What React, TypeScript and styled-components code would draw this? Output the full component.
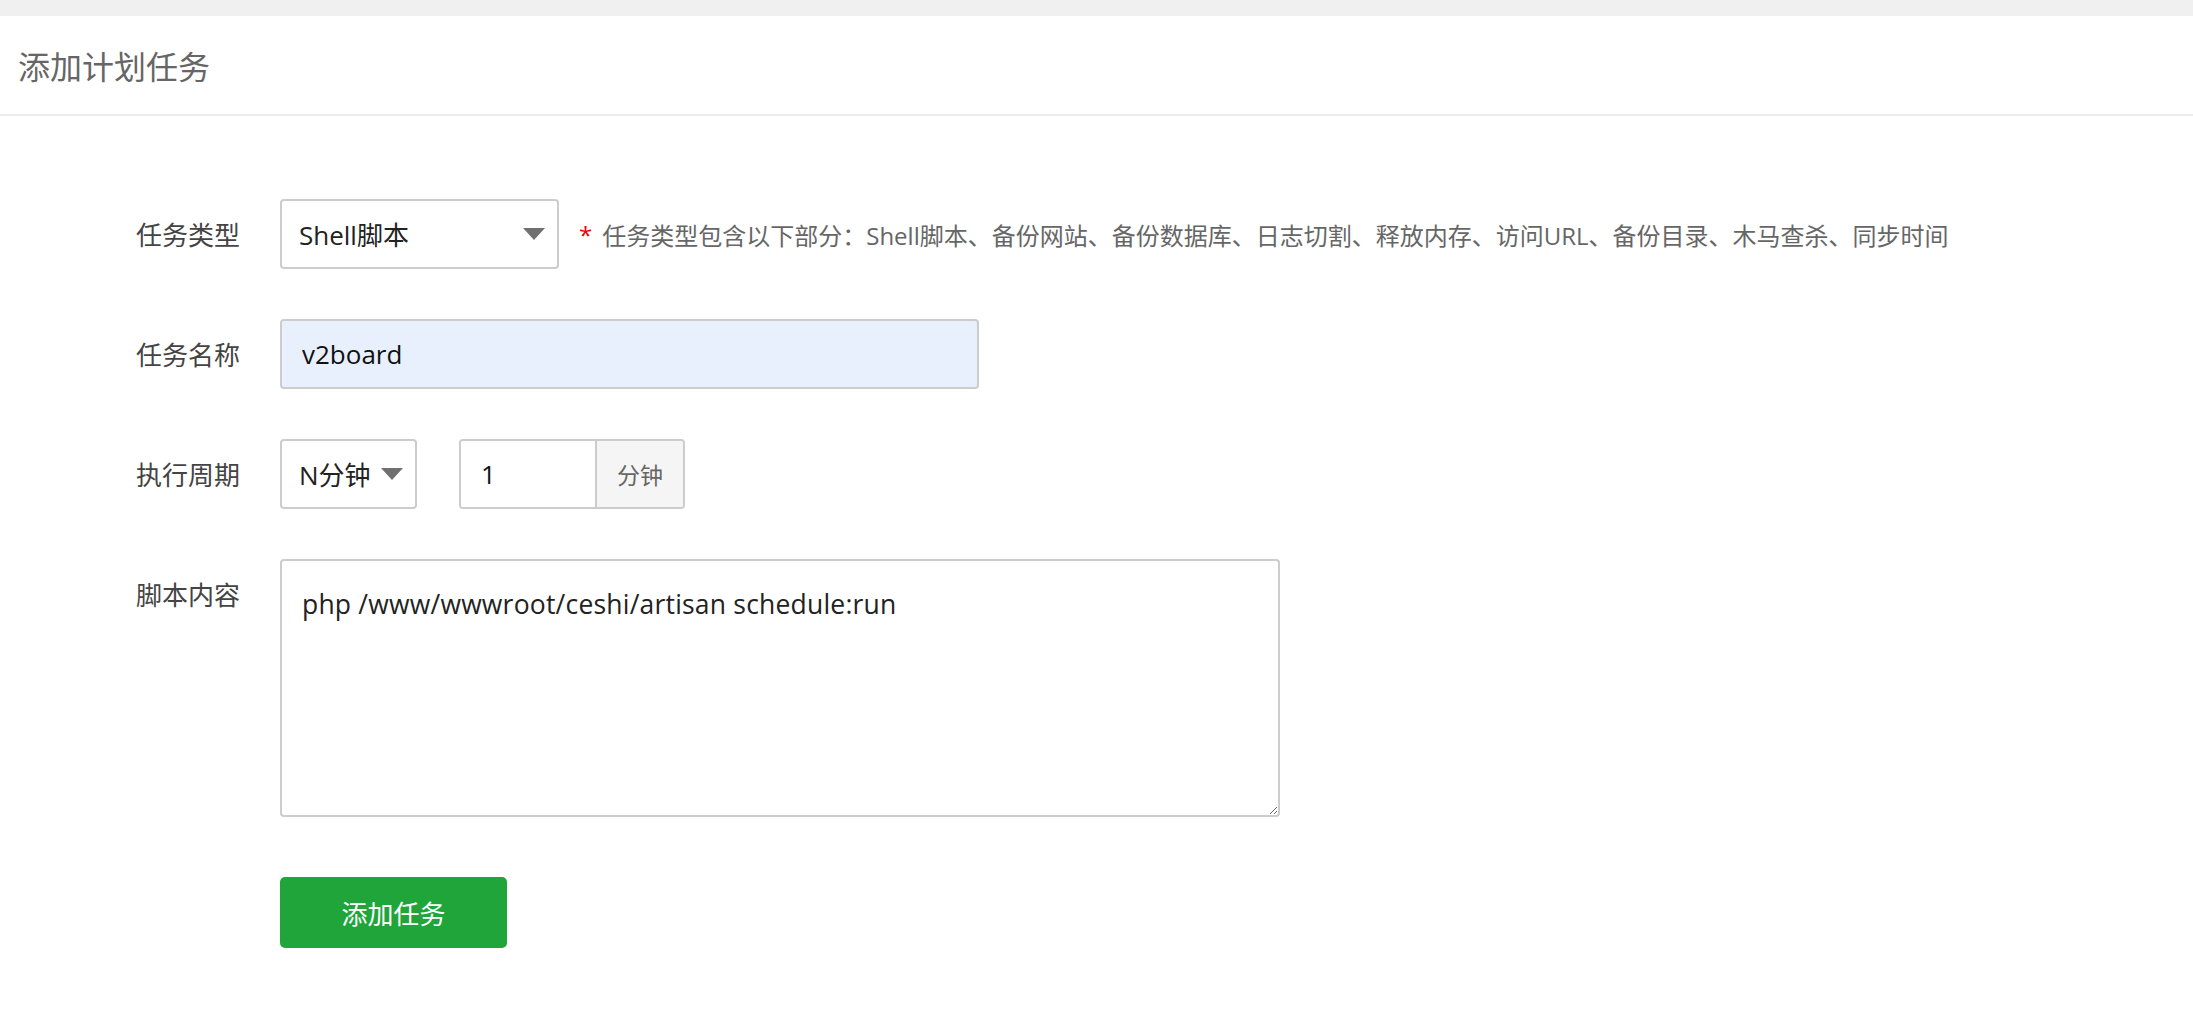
import React from "react";
import styled, { createGlobalStyle } from "styled-components";

const GlobalStyle = createGlobalStyle`
  html, body {
    margin: 0;
    padding: 0;
    background: #f0f0f0;
  }
  body {
    font-family: "Open Sans", "Noto Sans CJK SC", sans-serif;
  }
  * {
    box-sizing: border-box;
  }
`;

const TASK_TYPES =
  "任务类型包含以下部分：Shell脚本、备份网站、备份数据库、日志切割、释放内存、访问URL、备份目录、木马查杀、同步时间";

const Caret: React.FC = () => (
  <svg width="22" height="12" viewBox="0 0 22 12">
    <polygon points="0,0 22,0 11,12" fill="#707070" />
  </svg>
);

const App: React.FC = () => {
  return (
    <Page>
      <GlobalStyle />
      <Panel>
        <Header>
          <Title>添加计划任务</Title>
        </Header>

        <Form>
          <Row>
            <Label>任务类型</Label>
            <SelectBox width={279}>
              <span>Shell脚本</span>
              <Caret />
            </SelectBox>
            <Hint>
              <Star>*</Star>
              {TASK_TYPES}
            </Hint>
          </Row>

          <Row>
            <Label>任务名称</Label>
            <TextInput width={699} filled defaultValue="v2board" />
          </Row>

          <Row>
            <Label>执行周期</Label>
            <SelectBox width={137}>
              <span>N分钟</span>
              <Caret />
            </SelectBox>
            <InputGroup>
              <GroupInput defaultValue="1" />
              <Addon>分钟</Addon>
            </InputGroup>
          </Row>

          <Row top>
            <Label>脚本内容</Label>
            <ScriptArea defaultValue="php /www/wwwroot/ceshi/artisan schedule:run" />
          </Row>

          <ButtonRow>
            <SubmitButton type="button">添加任务</SubmitButton>
          </ButtonRow>
        </Form>
      </Panel>
    </Page>
  );
};

export default App;

const Page = styled.div`
  min-height: 100vh;
  padding-top: 16px;
  display: flex;
  flex-direction: column;
`;

const Panel = styled.div`
  flex: 1;
  background: #fff;
`;

const Header = styled.div`
  height: 100px;
  padding-left: 18px;
  display: flex;
  align-items: center;
  border-bottom: 2px solid #ececec;
`;

const Title = styled.h1`
  margin: 0;
  font-size: 32px;
  font-weight: 400;
  color: #666;
  font-family: "Noto Sans CJK SC", sans-serif;
`;

const Form = styled.div`
  padding-top: 83px;
  display: flex;
  flex-direction: column;
  gap: 50px;
`;

const Row = styled.div<{ top?: boolean }>`
  display: flex;
  align-items: ${(p) => (p.top ? "flex-start" : "center")};
`;

const Label = styled.div`
  width: 240px;
  margin-right: 40px;
  text-align: right;
  font-size: 26px;
  line-height: 70px;
  color: #444;
  font-family: "Noto Sans CJK SC", sans-serif;
`;

const SelectBox = styled.div<{ width: number }>`
  width: ${(p) => p.width}px;
  height: 70px;
  padding: 0 12px 0 17px;
  display: flex;
  align-items: center;
  justify-content: space-between;
  border: 2px solid #ccc;
  border-radius: 4px;
  background: #fff;
  font-size: 26px;
  color: #222;
`;

const Hint = styled.div`
  margin-left: 20px;
  font-size: 24px;
  color: #666;
  display: flex;
  align-items: center;
`;

const Star = styled.span`
  color: #e00;
  margin-right: 10px;
`;

const TextInput = styled.input<{ width: number; filled?: boolean }>`
  width: ${(p) => p.width}px;
  height: 70px;
  padding: 0 20px;
  border: 2px solid #ccc;
  border-radius: 4px;
  background: ${(p) => (p.filled ? "#e8f0fe" : "#fff")};
  font-family: inherit;
  font-size: 26px;
  color: #111;
  outline: none;
`;

const InputGroup = styled.div`
  margin-left: 42px;
  display: flex;
  height: 70px;
  border: 2px solid #ccc;
  border-radius: 4px;
  overflow: hidden;
`;

const GroupInput = styled.input`
  width: 136px;
  height: 100%;
  padding: 0 20px;
  border: none;
  border-right: 2px solid #ccc;
  font-family: inherit;
  font-size: 26px;
  color: #111;
  outline: none;
`;

const Addon = styled.div`
  width: 86px;
  display: flex;
  align-items: center;
  justify-content: center;
  background: #f5f5f5;
  font-size: 23px;
  color: #666;
  font-family: "Noto Sans CJK SC", sans-serif;
`;

const ScriptArea = styled.textarea`
  width: 1000px;
  height: 258px;
  padding: 20px 20px;
  border: 2px solid #ccc;
  border-radius: 4px;
  font-family: inherit;
  font-size: 26.5px;
  letter-spacing: 0.2px;
  line-height: 46px;
  color: #222;
  outline: none;
  resize: both;
`;

const ButtonRow = styled.div`
  padding-left: 280px;
  padding-top: 10px;
`;

const SubmitButton = styled.button`
  width: 227px;
  height: 71px;
  border: none;
  border-radius: 5px;
  background: #20a53a;
  color: #fff;
  font-size: 26px;
  font-family: "Noto Sans CJK SC", sans-serif;
  cursor: pointer;
`;
